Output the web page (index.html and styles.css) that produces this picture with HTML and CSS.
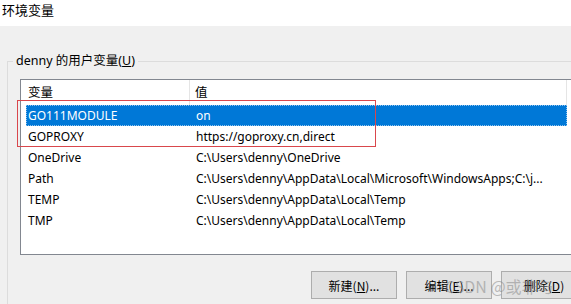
FILE: index.html
```html
<!DOCTYPE html>
<html lang="zh-CN">
<head>
    <meta charset="UTF-8">
    <meta name="viewport" content="width=device-width, initial-scale=1.0">
    <title>环境变量</title>
    <link rel="stylesheet" href="styles.css">
</head>
<body>

    <div class="titlebar">环境变量</div>

    <div class="dialog">
        <div class="group">
            <span class="group-label">denny 的用户变量(<u>U</u>)</span>

            <div class="list">
                <div class="list-head">
                    <div class="col-name">变量</div>
                    <div class="col-value">值</div>
                </div>
                <div class="row selected">
                    <div class="col-name">GO111MODULE</div>
                    <div class="col-value">on</div>
                </div>
                <div class="row">
                    <div class="col-name">GOPROXY</div>
                    <div class="col-value">https://goproxy.cn,direct</div>
                </div>
                <div class="row">
                    <div class="col-name">OneDrive</div>
                    <div class="col-value">C:\Users\denny\OneDrive</div>
                </div>
                <div class="row">
                    <div class="col-name">Path</div>
                    <div class="col-value">C:\Users\denny\AppData\Local\Microsoft\WindowsApps;C:\j...</div>
                </div>
                <div class="row">
                    <div class="col-name">TEMP</div>
                    <div class="col-value">C:\Users\denny\AppData\Local\Temp</div>
                </div>
                <div class="row">
                    <div class="col-name">TMP</div>
                    <div class="col-value">C:\Users\denny\AppData\Local\Temp</div>
                </div>

                <!-- marca vermelha em volta das duas linhas -->
                <div class="highlight"></div>
            </div>

            <div class="buttons">
                <button>新建(<u>N</u>)...</button>
                <button>编辑(<u>E</u>)...</button>
                <button>删除(<u>D</u>)</button>
                <span class="watermark">CSDN @或非与</span>
            </div>
        </div>
    </div>

</body>
</html>
```

FILE: styles.css
```css
* {
    box-sizing: border-box;
    margin: 0;
    padding: 0;
}
body {
    font-family: "Noto Sans", "Noto Sans CJK SC", sans-serif;
    font-size: 12px;
    color: #000;
    background-color: #f0f0f0;
    width: 571px;
    height: 304px;
    overflow: hidden;
}
.titlebar {
    height: 26px;
    background-color: #fff;
    padding-left: 2px;
    font-family: "Noto Sans CJK SC", sans-serif;
    font-size: 13px;
    line-height: 20px;
}
.dialog {
    height: 278px;
    overflow: hidden;
    padding: 35px 0 0 7px;
}
.group {
    height: 260px;
    border: 1px solid #dcdcdc;
    border-right: none;
    border-bottom: none;
    padding: 0 0 0 12px;
}
.group-label {
    display: inline-block;
    margin: -10px 0 0 -7px;
    padding: 0 3px;
    height: 18px;
    line-height: 18px;
    font-size: 12.5px;
    background-color: #f0f0f0;
    vertical-align: top;
}
.list {
    position: relative;
    height: 176px;
    margin-right: -10px;
    background-color: #fff;
    border: 1px solid #828790;
    border-right: none;
}
.list-head {
    display: flex;
    height: 25px;
    width: 546px;
    line-height: 24px;
    border-right: 1px solid #e5e5e5;
    padding-left: 5px;
}
.list-head .col-name {
    border-right: 1px solid #e5e5e5;
}
.col-name {
    width: 164px;
    padding-left: 2px;
    flex-shrink: 0;
}
.col-value {
    padding-left: 5px;
    white-space: nowrap;
}
.list-head div {
    font-family: "Noto Sans CJK SC", sans-serif;
    font-size: 12.5px;
}
.row {
    display: flex;
    height: 21px;
    line-height: 21px;
    margin-left: 5px;
    width: 541px;
}
.row .col-name {
    width: 165px;
    padding-left: 2px;
}
.row.selected {
    background-color: #0078d7;
    color: #fff;
    outline: 1px dotted #8fc3ee;
    outline-offset: -1px;
}
.highlight {
    position: absolute;
    left: -4px;
    top: 20px;
    width: 359px;
    height: 47px;
    border: 1px solid #d9474c;
}
.buttons {
    position: relative;
    display: flex;
    gap: 9px;
    margin-top: 16px;
    padding-left: 291px;
    overflow: hidden;
}
.buttons button {
    width: 86px;
    height: 28px;
    background-color: #e1e1e1;
    border: 1px solid #adadad;
    font-family: "Noto Sans CJK SC", sans-serif;
    font-size: 12px;
    color: #000;
    flex-shrink: 0;
}
.watermark {
    position: absolute;
    left: 425px;
    top: 3px;
    font-family: "Noto Sans CJK SC", sans-serif;
    font-size: 16px;
    color: rgba(130, 130, 130, 0.5);
    white-space: nowrap;
}
```
